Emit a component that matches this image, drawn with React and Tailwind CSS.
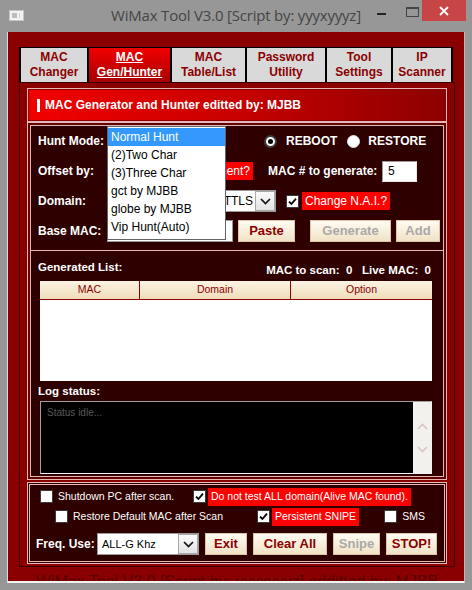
import React from 'react'

const tabs = [
    { a: 'MAC', b: 'Changer', w: 'w-[68px]' },
    { a: 'MAC', b: 'Gen/Hunter', w: 'w-[83px]', active: true },
    { a: 'MAC', b: 'Table/List', w: 'w-[75px]' },
    { a: 'Password', b: 'Utility', w: 'w-[80px]' },
    { a: 'Tool', b: 'Settings', w: 'w-[66px]' },
    { a: 'IP', b: 'Scanner', w: 'w-[62px]' },
]

const huntModes = ['Normal Hunt', '(2)Two Char', '(3)Three Char', 'gct by MJBB', 'globe by MJBB', 'Vip Hunt(Auto)']

const Check = ({ checked }) => (
    <span className="w-[13px] h-[13px] bg-white border border-[#3a3a3a] flex items-center justify-center shrink-0">
        {checked && (
            <svg width="9" height="9" viewBox="0 0 9 9">
                <path d="M1 4.6 L3.4 7 L8 1.6" stroke="#000" strokeWidth="1.8" fill="none" />
            </svg>
        )}
    </span>
)

const Radio = ({ checked }) => (
    <span className={`w-[13px] h-[13px] rounded-full bg-white flex items-center justify-center shrink-0 ${checked ? 'border-2 border-[#3c3c3c]' : 'border border-[#e0e0e0]'}`}>
        {checked && <span className="w-[5px] h-[5px] rounded-full bg-black" />}
    </span>
)

const Btn = ({ children, disabled, w }) => (
    <div className={`${w} h-[22px] shrink-0 flex items-center justify-center border border-[#d9c7a6] bg-gradient-to-b from-[#fffbf2] to-[#f1e2c6] text-[13px] font-bold ${disabled ? 'text-[#a9a9a9]' : 'text-[#8b0000]'}`}>
        {children}
    </div>
)

const Arrow = () => (
    <span className="w-[20px] h-full bg-gradient-to-b from-[#fbfbfb] to-[#e2e2e2] border border-[#a8a8a8] flex items-center justify-center shrink-0">
        <svg width="11" height="7" viewBox="0 0 11 7">
            <path d="M1 1 L5.5 5.5 L10 1" stroke="#111" strokeWidth="1.7" fill="none" />
        </svg>
    </span>
)

const RedLabel = ({ children }) => (
    <span className="bg-[#ff0000] text-white px-[3px] h-[18px] flex items-center whitespace-nowrap">{children}</span>
)

export default function App() {
    return (
        <div className="w-[472px] h-[590px] bg-[#979797] overflow-hidden font-['Liberation_Sans',Arial,sans-serif] select-none">
            {/* title bar */}
            <div className="h-[32px] relative flex items-center justify-center">
                <div className="absolute left-[9px] top-[10px] w-[15px] h-[11px] bg-[#f2f2f2] border border-[#c4c4c4] flex gap-[2px] p-[2px]">
                    <span className="w-[5px] h-full bg-[#bdbdbd]" />
                    <span className="flex-1 h-full border-l border-[#cfcfcf]" />
                </div>
                <span className="text-[15px] text-[#454545] font-['Open_Sans',sans-serif] -mt-[2px] tracking-[-0.2px]">WiMax Tool V3.0 [Script by: yyyxyyyz]</span>
                <span className="absolute left-[377px] top-[13px] w-[9px] h-[2px] bg-[#222]" />
                <span className="absolute left-[406px] top-[7px] w-[13px] h-[10px] border border-[#444] border-t-2" />
                <div className="absolute left-[422px] top-0 w-[44px] h-[21px] bg-[#c84545] flex items-center justify-center">
                    <svg width="10" height="10" viewBox="0 0 10 10">
                        <path d="M1 1 L9 9 M9 1 L1 9" stroke="#fff" strokeWidth="1.8" />
                    </svg>
                </div>
            </div>

            {/* client area */}
            <div className="px-[7px]">
                <div className="h-[551px] bg-[#8a0000] border-l border-r border-b-2 border-l-[#dcdcdc] border-r-[#b8b8b8] border-b-[#f2f2f2] pl-[11px] pr-[9px] pt-[15px] relative overflow-hidden">
                    {/* tabs */}
                    <div className="flex h-[35px]">
                        {tabs.map((t, i) => (
                            <div
                                key={i}
                                className={`${t.w} h-full border-t border-l-2 border-black flex flex-col items-center justify-center text-[12px] font-bold leading-[15px] ${i === tabs.length - 1 ? 'border-r-2' : ''} ${t.active ? 'bg-gradient-to-b from-[#f20000] to-[#a80000] text-white underline' : 'bg-[#d9d9d9] text-[#8b0000]'}`}
                            >
                                <span>{t.a}</span>
                                <span>{t.b}</span>
                            </div>
                        ))}
                    </div>

                    {/* tab page */}
                    <div className="h-[485px] border border-[#3a0000] px-[7px] pt-[5px] flex flex-col">
                        {/* header */}
                        <div className="border border-[#e9b6b6] p-px">
                            <div className="h-[30px] bg-gradient-to-r from-[#f20000] via-[#c80000] to-[#8c0000] flex items-center pl-[8px]">
                                <span className="w-[3px] h-[13px] bg-white mr-[5px]" />
                                <span className="text-white text-[12px] font-bold">MAC Generator and Hunter editted by: MJBB</span>
                            </div>
                        </div>

                        {/* main panel */}
                        <div className="h-[358px] border border-[#e9b6b6] p-[2px] bg-[#5c0000]">
                            <div className="h-full border border-[#e9b6b6] bg-[#2e0000] flex flex-col">
                                {/* form rows */}
                                <div className="h-[125px] shrink-0 border-b border-[#e9b6b6] pl-[7px] relative text-white text-[12px] font-bold">
                                    <div className="h-[30px] flex items-center">
                                        <span className="w-[69px] shrink-0">Hunt Mode:</span>
                                        <div className="w-[118px] h-[20px] bg-white border border-[#888] shrink-0" />
                                        <div className="ml-[39px] flex items-center">
                                            <Radio checked />
                                            <span className="ml-[9px]">REBOOT</span>
                                            <span className="ml-[10px]"><Radio /></span>
                                            <span className="ml-[8px]">RESTORE</span>
                                        </div>
                                    </div>
                                    <div className="h-[30px] flex items-center">
                                        <span className="w-[69px] shrink-0">Offset by:</span>
                                        <div className="w-[146px] flex items-center justify-end shrink-0">
                                            <span className="font-normal"><RedLabel>Increment?</RedLabel></span>
                                        </div>
                                        <span className="ml-[15px] w-[114px] shrink-0">MAC # to generate:</span>
                                        <div className="w-[35px] h-[21px] bg-white border border-t-[#9a9a9a] border-l-[#9a9a9a] border-b-[#e8e8e8] border-r-[#e8e8e8] text-black font-normal text-[12px] pl-[5px] flex items-center">5</div>
                                    </div>
                                    <div className="h-[30px] flex items-center">
                                        <span className="w-[69px] shrink-0">Domain:</span>
                                        <div className="w-[169px] h-[22px] bg-white border border-[#9a9a9a] flex items-center shrink-0">
                                            <span className="flex-1 text-right pr-[2px] text-black font-normal text-[12px]">EAP-TTLS</span>
                                            <Arrow />
                                        </div>
                                        <span className="ml-[10px]"><Check checked /></span>
                                        <span className="ml-[3px] font-normal"><RedLabel>Change N.A.I.?</RedLabel></span>
                                    </div>
                                    <div className="h-[30px] flex items-center">
                                        <span className="w-[69px] shrink-0">Base MAC:</span>
                                        <div className="w-[126px] h-[22px] bg-white border border-[#9a9a9a] shrink-0" />
                                        <span className="ml-[5px]"><Btn w="w-[57px]">Paste</Btn></span>
                                        <span className="ml-[15px]"><Btn w="w-[81px]" disabled>Generate</Btn></span>
                                        <span className="ml-[5px]"><Btn w="w-[44px]" disabled>Add</Btn></span>
                                    </div>

                                    {/* open hunt mode dropdown */}
                                    <div className="absolute left-[76px] top-0 w-[119px] h-[114px] bg-white border border-[#646464] pt-px font-normal text-[12px] text-black">
                                        {huntModes.map((m, i) => (
                                            <div key={m} className={`h-[18px] pl-[3px] flex items-center ${i === 0 ? 'bg-[#3399ff] text-white' : ''}`}>{m}</div>
                                        ))}
                                    </div>
                                </div>

                                {/* list + log */}
                                <div className="flex-1 pl-[7px] pr-[12px] text-white text-[11.5px] font-bold">
                                    <div className="h-[30px] flex items-end justify-between">
                                        <span className="mb-[7px] leading-[13px]">Generated List:</span>
                                        <span className="mb-[4px] leading-[13px] whitespace-pre">MAC to scan:  0   Live MAC:  0</span>
                                    </div>
                                    <div className="ml-[2px] w-[392px] h-[100px] bg-white flex flex-col">
                                        <div className="h-[19px] flex bg-gradient-to-b from-[#fbf3e3] to-[#efdcba] border-b border-[#8b0000] text-[10.5px] font-normal text-[#8b0000]">
                                            <span className="w-[100px] border-r border-[#8b0000] flex items-center justify-center">MAC</span>
                                            <span className="w-[151px] border-r border-[#8b0000] flex items-center justify-center">Domain</span>
                                            <span className="flex-1 flex items-center justify-center">Option</span>
                                        </div>
                                    </div>
                                    <div className="h-[20px] flex items-center pt-[2px]">Log status:</div>
                                    <div className="ml-[2px] w-[392px] h-[73px] bg-black border border-t-[#a0a0a0] border-l-[#a0a0a0] border-b-[#f0f0f0] border-r-[#f0f0f0] flex">
                                        <span className="flex-1 pl-[6px] pt-[3px] text-[10px] font-normal text-[#5a5a5a]">Status idle...</span>
                                        <div className="w-[18px] h-full bg-[#f3f1ee] flex flex-col items-center justify-center gap-[16px]">
                                            <svg width="11" height="7" viewBox="0 0 11 7"><path d="M1 6 L5.5 1.5 L10 6" stroke="#d8c4c4" strokeWidth="1.6" fill="none" /></svg>
                                            <svg width="11" height="7" viewBox="0 0 11 7"><path d="M1 1 L5.5 5.5 L10 1" stroke="#d8c4c4" strokeWidth="1.6" fill="none" /></svg>
                                        </div>
                                    </div>
                                </div>
                            </div>
                        </div>

                        {/* bottom options */}
                        <div className="mt-[2px] h-[82px] border-[3px] border-double border-[#e9b6b6] bg-[#2e0000] text-white text-[10.5px]">
                            <div className="h-[21px] mt-px flex items-center pl-[10px]">
                                <Check />
                                <span className="ml-[5px] w-[135px] shrink-0">Shutdown PC after scan.</span>
                                <Check checked />
                                <span className="ml-[2px]"><RedLabel>Do not test ALL domain(Alive MAC found).</RedLabel></span>
                            </div>
                            <div className="h-[19px] flex items-center pl-[25px]">
                                <Check />
                                <span className="ml-[5px] w-[184px] shrink-0">Restore Default MAC after Scan</span>
                                <Check checked />
                                <span className="ml-[2px]"><RedLabel>Persistent SNIPE</RedLabel></span>
                                <span className="ml-[25px]"><Check /></span>
                                <span className="ml-[5px]">SMS</span>
                            </div>
                            <div className="h-[24px] mt-[6px] flex items-center pl-[6px]">
                                <span className="w-[61px] shrink-0 text-[12px] font-bold">Freq. Use:</span>
                                <div className="w-[102px] h-[22px] bg-white border border-[#9a9a9a] flex items-center shrink-0">
                                    <span className="flex-1 pl-[4px] text-black text-[11px]">ALL-G Khz</span>
                                    <Arrow />
                                </div>
                                <span className="ml-[6px]"><Btn w="w-[42px]">Exit</Btn></span>
                                <span className="ml-[6px]"><Btn w="w-[74px]">Clear All</Btn></span>
                                <span className="ml-[6px]"><Btn w="w-[47px]" disabled>Snipe</Btn></span>
                                <span className="ml-[6px]"><Btn w="w-[51px]">STOP!</Btn></span>
                            </div>
                        </div>
                    </div>

                    {/* status text, cut off by window edge as in the original */}
                    <div className="h-[12px] mt-[6px] overflow-visible flex justify-center">
                        <span className="text-[16px] leading-[18px] text-[#560000] whitespace-nowrap">WiMax Tool V3.0 [Script by: yyyxyyyz] edditted by: MJBB</span>
                    </div>
                </div>
            </div>
        </div>
    )
}
